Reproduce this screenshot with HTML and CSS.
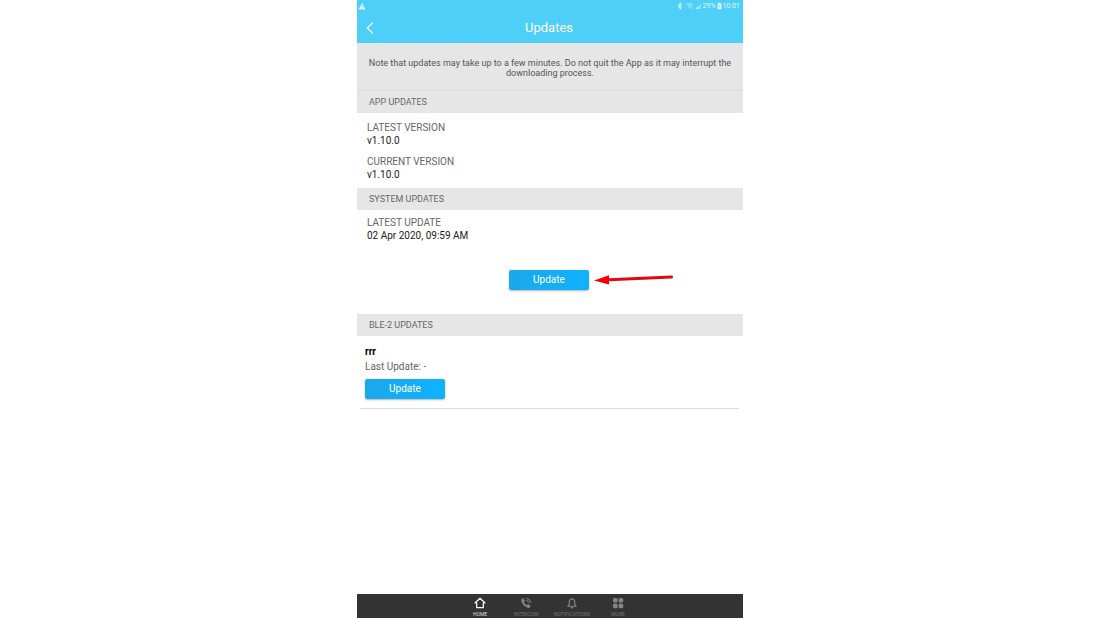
FILE: index.html
```html
<!DOCTYPE html>
<html lang="en">
<head>
  <meta charset="UTF-8" />
  <meta name="viewport" content="width=device-width, initial-scale=1.0" />
  <title>Updates</title>
  <link rel="stylesheet" href="styles.css">
</head>
<body>
  <div class="app">
    <header class="header">
      <div class="status-bar">
        <svg class="warning" width="8" height="8" viewBox="0 0 8 8" aria-hidden="true">
          <path d="M4 1L7.5 7.5H.5Z" fill="#e6f9ff" />
          <path d="M4 3.2v2M4 6v.7" stroke="#4dcff8" stroke-width=".8" />
        </svg>
        <div class="status-icons">
          <svg class="bluetooth" width="6" height="8" viewBox="0 0 6 8" aria-hidden="true">
            <path d="M1 2.3L4.7 5.6L3 7.2V.8L4.7 2.4L1 5.7" fill="none" stroke="#e6f9ff" stroke-width=".9" />
          </svg>
          <svg width="8" height="8" viewBox="0 0 8 8" aria-hidden="true">
            <path d="M.6 2.8Q3.7.2 7 2.8M1.9 4.3Q3.8 2.8 5.6 4.3" fill="none" stroke="#c4f0ff" stroke-width=".9" />
            <path d="M2.8 5.2H4.8L3.8 6.5ZM5.8 5.2h.8v1.7h-.8Z" fill="#c4f0ff" />
          </svg>
          <svg width="7" height="8" viewBox="0 0 7 8" aria-hidden="true">
            <path d="M.5 7L6 1.5V7Z" fill="#8ee2fc" />
            <path d="M.5 7L3 4.5V7Z" fill="#d6f5ff" />
          </svg>
          <span>29%</span>
          <svg width="5" height="8" viewBox="0 0 5 8" aria-hidden="true">
            <path d="M1.5.7h2v.8h1v5.7h-4V1.5h1Z" fill="#e6f9ff" />
            <path d="M1.7 3.2h1.6v2H1.7Z" fill="#7fdcfa" />
          </svg>
          <span>10:01</span>
        </div>
      </div>
      <div class="title-bar">
        <button class="back" type="button" aria-label="Back">
          <svg width="8" height="12" viewBox="0 0 8 12" aria-hidden="true">
            <path d="M6.6.7L1.2 6L6.6 11.3" fill="none" stroke="#fff" stroke-width="1.2" />
          </svg>
        </button>
        <h1>Updates</h1>
      </div>
    </header>

    <main>
      <p class="note">Note that updates may take up to a few minutes. Do not quit the App as it may interrupt the downloading process.</p>

      <h2>APP UPDATES</h2>
      <dl class="versions">
        <div>
          <dt>LATEST VERSION</dt>
          <dd>v1.10.0</dd>
        </div>
        <div>
          <dt>CURRENT VERSION</dt>
          <dd>v1.10.0</dd>
        </div>
      </dl>

      <h2>SYSTEM UPDATES</h2>
      <dl class="versions system">
        <div>
          <dt>LATEST UPDATE</dt>
          <dd>02 Apr 2020, 09:59 AM</dd>
        </div>
      </dl>
      <div class="system-action">
        <button class="update" type="button">Update</button>
        <svg class="arrow" width="80" height="12" viewBox="0 0 80 12" aria-hidden="true">
          <path d="M15 6.8L77.5 4" fill="none" stroke="#e30613" stroke-width="3" stroke-linecap="round" />
          <path d="M0 7.4L15 2.2V11.6Z" fill="#f80000" />
        </svg>
      </div>

      <h2>BLE-2 UPDATES</h2>
      <div class="device">
        <h3>rrr</h3>
        <p>Last Update: -</p>
        <button class="update" type="button">Update</button>
      </div>
    </main>

    <nav class="tabs">
      <a class="active" href="#home">
        <svg width="12" height="12" viewBox="0 0 12 12" aria-hidden="true">
          <path d="M1 6L6 1.3L11 6H9.3V10.7H2.7V6Z" fill="none" stroke="currentColor" stroke-width="1.2" stroke-linejoin="round" />
        </svg>
        <span>HOME</span>
      </a>
      <a href="#intercom">
        <svg width="12" height="12" viewBox="0 0 12 12" aria-hidden="true">
          <path d="M1.5 2L3.4 1.3L5 3.8L3.9 5Q4.8 7.2 6.9 8.2L8.1 7.1L10.6 8.8L9.8 10.5Q8.8 11.4 6.5 10.3Q2.7 8.4 1.5 4.7Q1 3 1.5 2Z" fill="currentColor" />
          <path d="M6.2 1.3Q10.2 1.7 10.6 5.7M6.2 3.4Q8.3 3.7 8.6 5.8" fill="none" stroke="currentColor" stroke-width="1" />
        </svg>
        <span>INTERCOM</span>
      </a>
      <a href="#notifications">
        <svg width="12" height="12" viewBox="0 0 12 12" aria-hidden="true">
          <path d="M1.8 9.2L3.2 7.6V5Q3.3 2.3 6 2Q8.7 2.3 8.8 5V7.6L10.2 9.2Z" fill="none" stroke="currentColor" stroke-width="1.1" stroke-linejoin="round" />
          <path d="M6 .8V2M4.8 10.4H7.2L6 11.3Z" fill="currentColor" stroke="currentColor" stroke-width=".8" />
        </svg>
        <span>NOTIFICATIONS</span>
      </a>
      <a href="#more">
        <svg width="12" height="12" viewBox="0 0 12 12" aria-hidden="true">
          <g fill="currentColor">
            <rect x="1" y="1" width="4.6" height="4.6" rx="1.5" />
            <rect x="6.6" y="1" width="4.6" height="4.6" rx="1.5" />
            <rect x="1" y="6.6" width="4.6" height="4.6" rx="1.5" />
            <rect x="6.6" y="6.6" width="4.6" height="4.6" rx="1.5" />
          </g>
        </svg>
        <span>MORE</span>
      </a>
    </nav>
  </div>
</body>
</html>
```

FILE: styles.css
```css
* { box-sizing: border-box; }
body { margin: 0; background: #fff; font-family: Roboto, "Liberation Sans", sans-serif; font-size: 10px; line-height: 13px; color: #222; }
h1, h2, h3, p, dl, dd { margin: 0; font-weight: normal; }
button { border: none; font-family: inherit; cursor: pointer; }
svg { display: block; flex: none; }

.app { display: flex; flex-direction: column; width: 100%; max-width: 386px; min-height: 100vh; margin: 0 auto; }

.header { background: #4dcff8; color: #fff; }
.status-bar { display: flex; justify-content: space-between; align-items: center; height: 12px; padding: 0 3px 0 1px; }
.status-icons { display: flex; align-items: center; gap: 1px; font-size: 7px; line-height: 12px; color: #e6f9ff; }
.bluetooth { margin-right: 2px; }
.title-bar { display: grid; grid-template-columns: 26px 1fr 28px; align-items: center; height: 31px; }
.back { display: flex; justify-content: center; padding: 8px 0; background: none; }
h1 { font-size: 13px; line-height: 16px; text-align: center; }

.note { padding: 15px 8px 12px; background: #e6e6e6; border-bottom: 1px solid #dadada; color: #555; font-size: 9px; line-height: 10px; text-align: center; }
h2 { padding: 0 12px; background: #e6e6e6; color: #666; font-size: 9px; line-height: 22px; }
.versions { display: grid; gap: 8px; padding: 8px 10px 7px; }
.versions.system { padding-top: 6px; }
dt { color: #666; }

.system-action { position: relative; display: flex; justify-content: center; padding: 21px 2px 24px 0; }
.update { width: 80px; height: 20px; padding: 0; border-radius: 2px; background: linear-gradient(to right, #1ca8ea, #0fb2ff); box-shadow: 0 1px 2px rgba(0,0,0,0.3); color: #fff; font-size: 10px; line-height: 20px; }
.arrow { position: absolute; top: 24px; left: calc(50% + 44px); }

.device { margin: 0 4px 0 3px; padding: 9px 5px; border-bottom: 1px solid #ddd; }
h3 { color: #000; font-size: 10px; line-height: 14px; font-weight: bold; }
.device p { margin-bottom: 4px; color: #666; line-height: 16px; }

.tabs { display: flex; justify-content: center; height: 24px; margin-top: auto; padding-right: 2px; background: #333; }
.tabs a { display: flex; flex-direction: column; align-items: center; width: 46px; padding-top: 3px; color: #858585; font-size: 5px; line-height: 11px; text-decoration: none; }
.tabs span { opacity: 0.8; }
.tabs .active { color: #fff; }
```
